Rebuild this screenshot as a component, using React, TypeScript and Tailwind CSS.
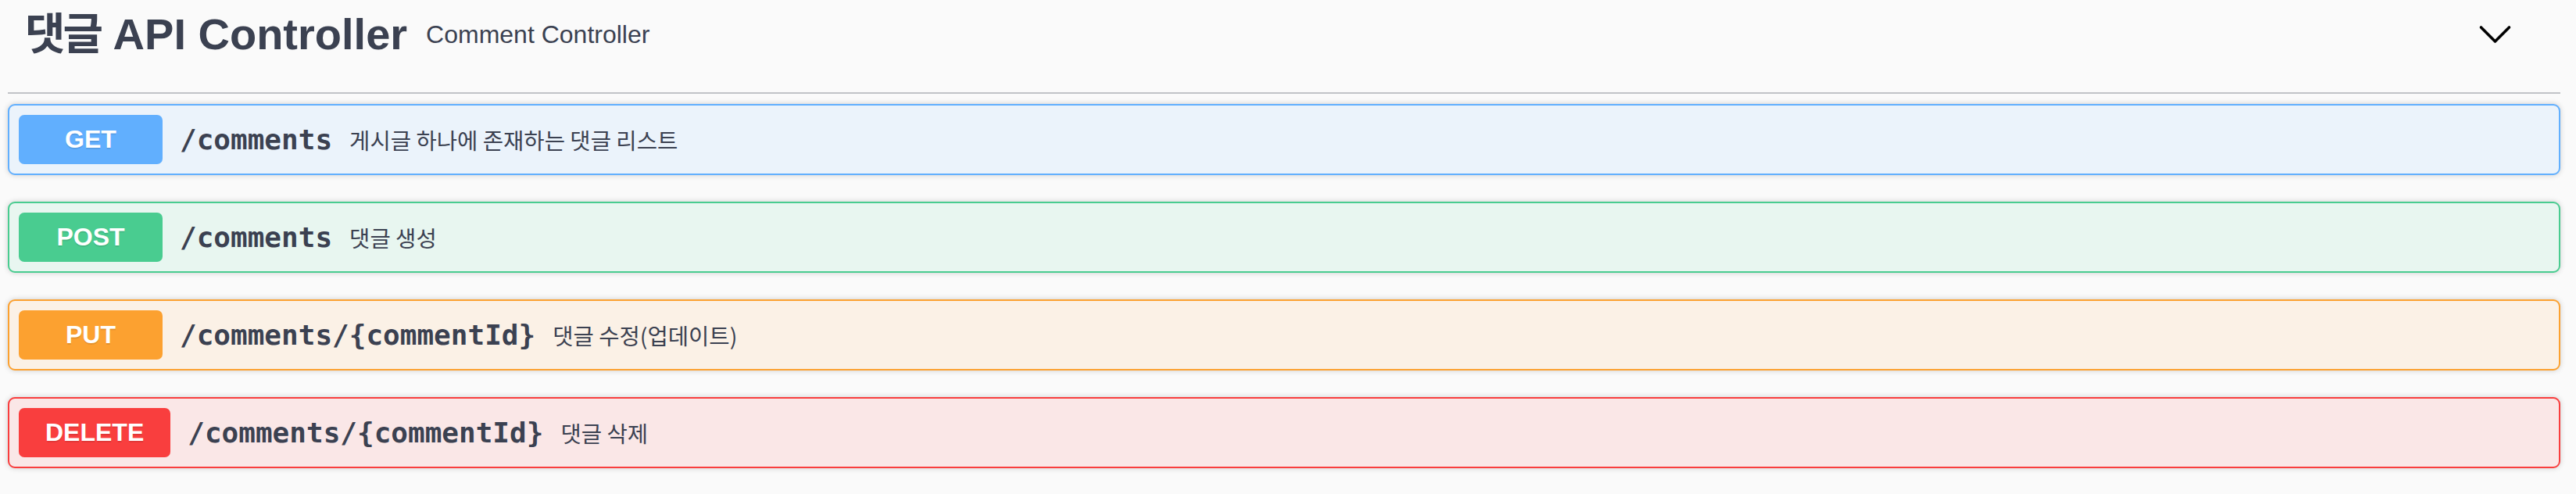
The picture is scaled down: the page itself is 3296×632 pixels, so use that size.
import React from "react";

type Op = {
  method: string;
  path: string;
  desc: string;
  block: string;
  btn: string;
};

const ops: Op[] = [
  {
    method: "GET",
    path: "/comments",
    desc: "게시글 하나에 존재하는 댓글 리스트",
    block: "border-[#61affe] bg-[#ebf3fb]",
    btn: "bg-[#61affe]",
  },
  {
    method: "POST",
    path: "/comments",
    desc: "댓글 생성",
    block: "border-[#49cc90] bg-[#e8f6f0]",
    btn: "bg-[#49cc90]",
  },
  {
    method: "PUT",
    path: "/comments/{commentId}",
    desc: "댓글 수정(업데이트)",
    block: "border-[#fca130] bg-[#fbf1e6]",
    btn: "bg-[#fca130]",
  },
  {
    method: "DELETE",
    path: "/comments/{commentId}",
    desc: "댓글 삭제",
    block: "border-[#f93e3e] bg-[#fae7e7]",
    btn: "bg-[#f93e3e]",
  },
];

function Chevron() {
  return (
    <svg
      width="44"
      height="44"
      viewBox="0 0 44 44"
      className="ml-auto mr-[62px] mb-[4px] shrink-0"
    >
      <polyline
        points="4.5,15 22.5,33 40.5,15"
        fill="none"
        stroke="#000"
        strokeWidth="3.6"
        strokeLinecap="round"
        strokeLinejoin="round"
      />
    </svg>
  );
}

function OpBlock({ op }: { op: Op }) {
  return (
    <div
      className={`flex items-center rounded-[9px] border-2 p-[12px] shadow-[0_0_7px_rgba(0,0,0,0.19)] ${op.block}`}
    >
      <div
        className={`min-w-[184px] rounded-[7px] px-[34px] py-[13px] text-center text-[32px] font-bold leading-[37px] text-white [text-shadow:0_2px_0_rgba(0,0,0,0.1)] font-['Liberation_Sans',sans-serif] ${op.btn}`}
      >
        {op.method}
      </div>
      <span className="px-[22px] font-['DejaVu_Sans_Mono',monospace] text-[36px] font-bold leading-[44px] text-[#3b4151]">
        {op.path}
      </span>
      <span className="font-['Noto_Sans_CJK_KR','Liberation_Sans',sans-serif] text-[28.6px] leading-[40px] text-[#3b4151]">
        {op.desc}
      </span>
    </div>
  );
}

export default function App() {
  return (
    <div className="min-h-screen bg-[#fafafa] pl-[10px] pr-[20px] font-['Liberation_Sans','Noto_Sans_CJK_KR',sans-serif]">
      <div className="flex h-[120px] items-center border-b-2 border-[#c1c3c7] pb-[30px] pl-[22px]">
        <span className="text-[56px] font-bold leading-[64px] text-[#3b4151]">
          <span className="tracking-[-3px]">댓글</span> API Controller
        </span>
        <span className="pl-[24px] text-[32px] leading-[40px] text-[#3b4151]">
          Comment Controller
        </span>
        <Chevron />
      </div>
      <div className="mt-[13px] flex flex-col gap-[34px] pb-[33px]">
        {ops.map((op) => (
          <OpBlock key={op.method} op={op} />
        ))}
      </div>
    </div>
  );
}
